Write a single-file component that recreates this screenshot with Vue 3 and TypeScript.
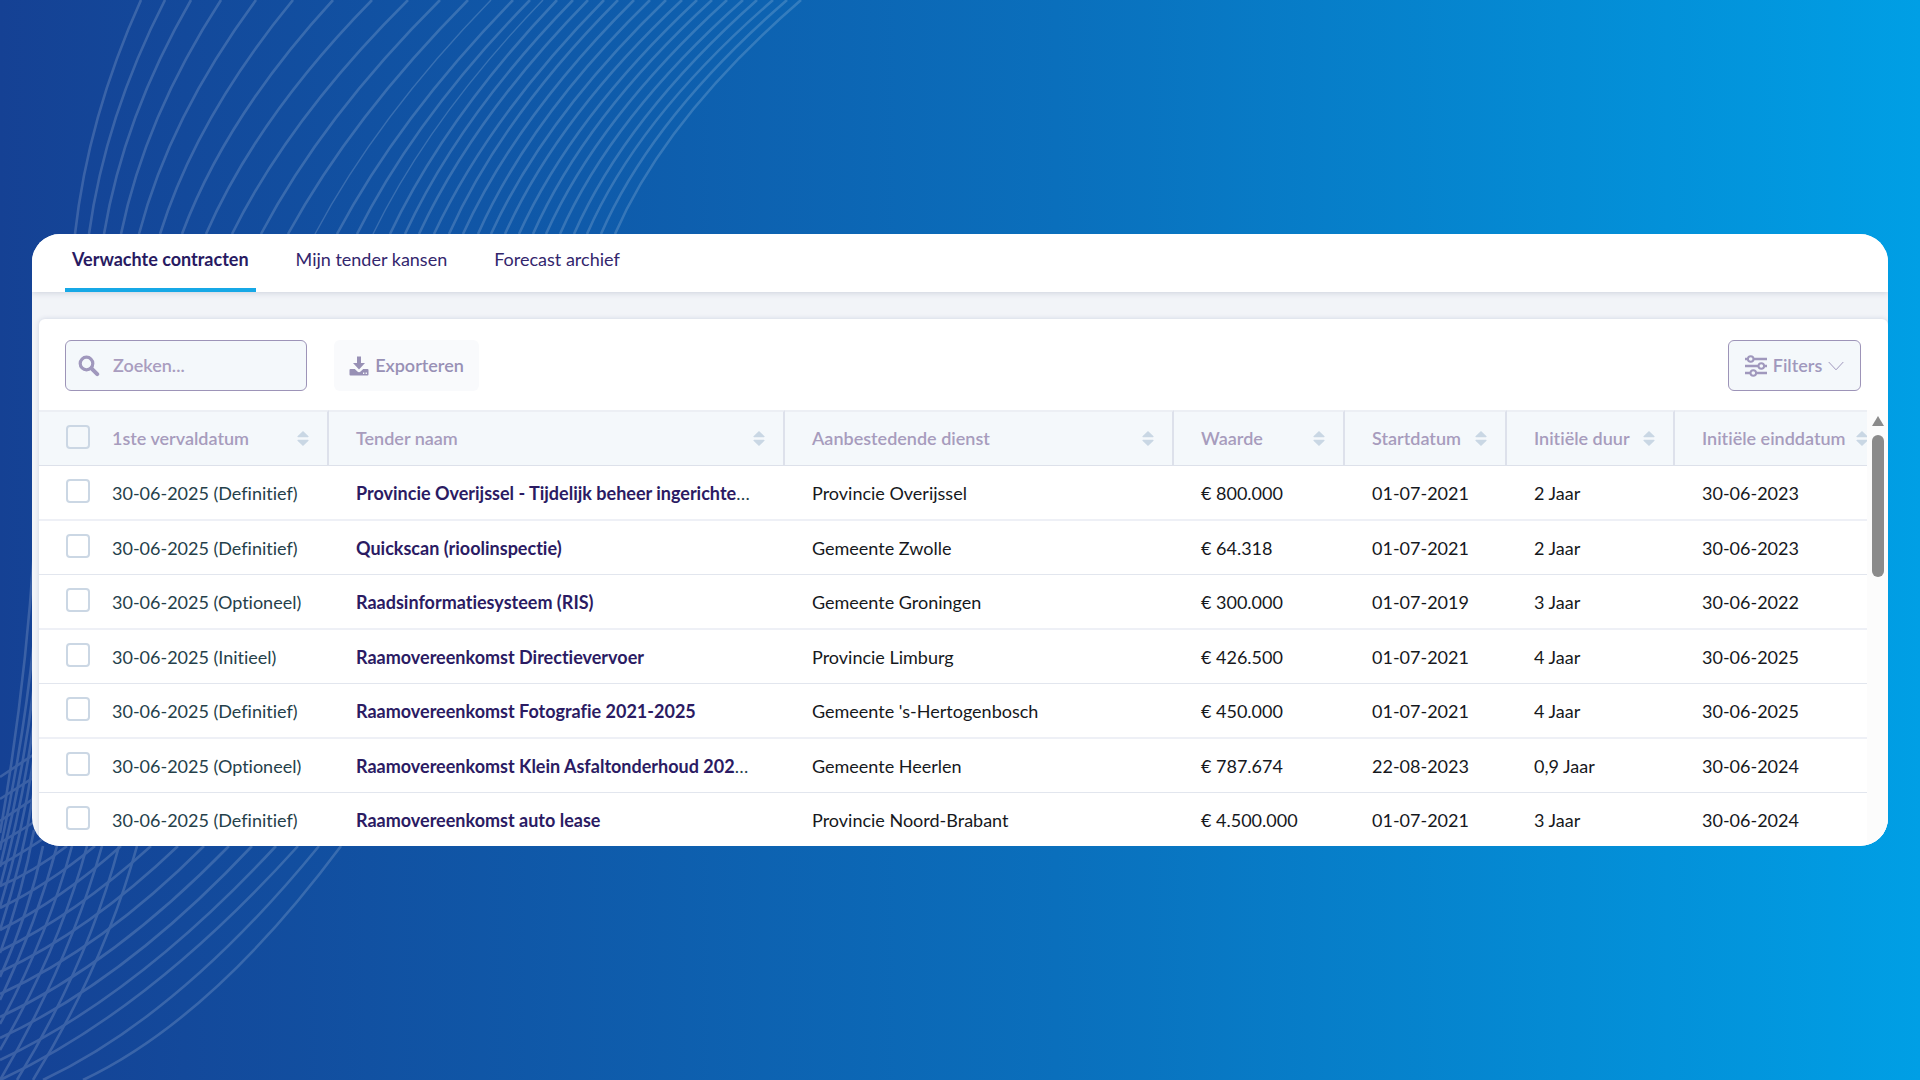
<script setup lang="ts">
import { ref } from 'vue'

interface Contract {
  expiry: string
  name: string
  truncated?: boolean
  authority: string
  value: string
  start: string
  duration: string
  end: string
}

type Curve = { d: string; w: number }

const tabs = ['Verwachte contracten', 'Mijn tender kansen', 'Forecast archief']
const activeTab = ref(0)
const query = ref('')

const columns = [
  { key: 'expiry', label: '1ste vervaldatum' },
  { key: 'name', label: 'Tender naam' },
  { key: 'authority', label: 'Aanbestedende dienst' },
  { key: 'value', label: 'Waarde' },
  { key: 'start', label: 'Startdatum' },
  { key: 'duration', label: 'Initiële duur' },
  { key: 'end', label: 'Initiële einddatum' },
]

const contracts: Contract[] = [
  { expiry: '30-06-2025 (Definitief)', name: 'Provincie Overijssel - Tijdelijk beheer ingerichte', truncated: true, authority: 'Provincie Overijssel', value: '€ 800.000', start: '01-07-2021', duration: '2 Jaar', end: '30-06-2023' },
  { expiry: '30-06-2025 (Definitief)', name: 'Quickscan (rioolinspectie)', authority: 'Gemeente Zwolle', value: '€ 64.318', start: '01-07-2021', duration: '2 Jaar', end: '30-06-2023' },
  { expiry: '30-06-2025 (Optioneel)', name: 'Raadsinformatiesysteem (RIS)', authority: 'Gemeente Groningen', value: '€ 300.000', start: '01-07-2019', duration: '3 Jaar', end: '30-06-2022' },
  { expiry: '30-06-2025 (Initieel)', name: 'Raamovereenkomst Directievervoer', authority: 'Provincie Limburg', value: '€ 426.500', start: '01-07-2021', duration: '4 Jaar', end: '30-06-2025' },
  { expiry: '30-06-2025 (Definitief)', name: 'Raamovereenkomst Fotografie 2021-2025', authority: "Gemeente 's-Hertogenbosch", value: '€ 450.000', start: '01-07-2021', duration: '4 Jaar', end: '30-06-2025' },
  { expiry: '30-06-2025 (Optioneel)', name: 'Raamovereenkomst Klein Asfaltonderhoud 202', truncated: true, authority: 'Gemeente Heerlen', value: '€ 787.674', start: '22-08-2023', duration: '0,9 Jaar', end: '30-06-2024' },
  { expiry: '30-06-2025 (Definitief)', name: 'Raamovereenkomst auto lease', authority: 'Provincie Noord-Brabant', value: '€ 4.500.000', start: '01-07-2021', duration: '3 Jaar', end: '30-06-2024' },
]

// Upper fan: [x at the top edge, x at y = 234, bow to the left, stroke width]
const fan: number[][] = [
  [141, 75, 10, 2], [165, 89, 11, 2], [191, 104, 12, 2], [221, 121, 13, 2], [256, 139, 14, 2],
  [293, 160, 15, 2], [333, 182, 16, 2], [372, 206, 16, 2], [408, 232, 15, 2], [440, 261, 14, 2],
  [468, 288, 13, 2], [491, 315, 13, 1], [513, 337, 13, 2], [530, 357, 14, 2], [543, 373, 14, 1],
  [557, 390, 14, 2], [573, 405, 15, 2], [588, 419, 15, 2], [604, 434, 15, 2], [618, 449, 16, 2],
  [634, 463, 16, 2], [650, 478, 17, 2], [666, 491, 17, 2], [682, 505, 18, 2], [697, 519, 18, 2],
  [712, 533, 19, 2], [727, 546, 19, 2], [743, 560, 20, 2], [757, 574, 20, 2], [773, 587, 21, 2],
  [787, 601, 21, 2], [801, 615, 21, 2],
]

// Lower net: [x1, y1, x2, y2, bow x, bow y]
const net: number[][] = [
  [341, 846, 83, 1080, 0, 28], [319, 846, 43, 1080, 0, 26], [298, 846, 0, 1080, 0, 24],
  [276, 846, 0, 1060, 0, 21], [252, 846, 0, 1038, 0, 19], [229, 846, 0, 1017, 0, 16],
  [204, 846, 0, 994, 0, 14], [178, 846, 0, 972, 0, 11], [151, 846, 0, 951, 0, 8],
  [121, 846, 0, 930, 0, 6], [95, 846, 0, 908, 0, 4], [67, 846, 0, 886, 0, 3],
  [50, 834, 0, 865, 0, 1], [36, 821, 0, 843, 0, 0], [36, 797, 0, 821, 0, 0],
  [36, 776, 0, 799, 0, 0], [36, 753, 0, 777, 0, 0],
  [137, 846, 33, 1080, 10, 0], [119, 846, 17, 1080, 10, 0], [102, 846, 0, 1080, 9, 0],
  [87, 846, 0, 1050, 8, 0], [72, 846, 0, 1024, 6, 0], [57, 846, 0, 1000, 4, 0],
  [43, 846, 0, 977, 4, 0], [34, 830, 0, 953, 3, 0], [34, 790, 0, 930, 3, 0],
  [34, 756, 0, 907, 3, 0], [34, 720, 0, 887, 3, 0], [34, 685, 0, 867, 3, 0],
  [34, 640, 0, 850, 3, 0], [34, 550, 0, 833, 4, 0],
]

const curves: Curve[] = [
  ...fan.map(([t, b, bow, w]) => ({ d: `M${t} 0Q${(t + b) / 2 - bow * 2} 117 ${b} 234`, w: w === 2 ? 2.6 : 1.4 })),
  ...net.map(([x1, y1, x2, y2, bx, by]) => ({
    d: `M${x1} ${y1}Q${(x1 + x2) / 2 + bx * 2} ${(y1 + y2) / 2 + by * 2} ${x2} ${y2}`,
    w: 2.6,
  })),
]
</script>

<template>
  <div class="page">
    <svg class="waves" viewBox="0 0 1920 1080" preserveAspectRatio="xMinYMin slice" aria-hidden="true">
      <g fill="none" stroke="#fff" opacity="0.16">
        <path v-for="(c, i) in curves" :key="i" :d="c.d" :stroke-width="c.w" />
      </g>
    </svg>

    <main class="card">
      <nav class="tabs">
        <a
          v-for="(tab, i) in tabs"
          :key="tab"
          href="#"
          class="tab"
          :class="{ active: i === activeTab }"
          @click.prevent="activeTab = i"
        >{{ tab }}</a>
      </nav>

      <section class="panel">
        <div class="toolbar">
          <label class="search">
            <svg width="22" height="22" viewBox="0 0 22 22" aria-hidden="true">
              <circle cx="8.500" cy="8.500" r="6.300" fill="none" stroke="currentColor" stroke-width="3.200" />
              <path d="M13.400 13.400l5.800 5.800" stroke="currentColor" stroke-width="4" stroke-linecap="round" />
            </svg>
            <input v-model="query" type="text" placeholder="Zoeken..." aria-label="Zoeken" />
          </label>
          <button type="button" class="export">
            <svg width="20" height="20" viewBox="0 0 20 20" aria-hidden="true">
              <path fill="currentColor" d="M8 .5h4v6.500h4L10 13.500 4 7h4z" />
              <path fill="currentColor" fill-rule="evenodd" d="M1.500 13h4.300l2.600 2.600q1.600 1.300 3.200 0l2.600-2.600h4.300q1 0 1 1v4.500q0 1-1 1h-17q-1 0-1-1V14q0-1 1-1zM14 16.600v1.400h1.300v-1.400zm2.600 0v1.400h1.300v-1.400z" />
            </svg>
            <span>Exporteren</span>
          </button>
          <button type="button" class="filters">
            <svg width="22" height="22" viewBox="0 0 22 22" fill="none" stroke="currentColor" stroke-width="2" aria-hidden="true">
              <path d="M0 4h3m5.500 0H22M0 11h13.500m5.500 0h3M0 18h5.500m5.500 0h11" stroke-width="2.600" />
              <circle cx="5.700" cy="4" r="2.800" />
              <circle cx="16.300" cy="11" r="2.800" />
              <circle cx="8.300" cy="18" r="2.800" />
            </svg>
            <span>Filters</span>
            <svg width="16" height="10" viewBox="0 0 16 10" fill="none" stroke="currentColor" aria-hidden="true">
              <path d="M.7 1L8 8.800 15.300 1" />
            </svg>
          </button>
        </div>

        <div class="grid">
          <div class="viewport">
            <table>
              <colgroup>
                <col class="c-check" />
                <col v-for="c in columns" :key="c.key" :class="'c-' + c.key" />
              </colgroup>
              <thead>
                <tr>
                  <th class="check"><input type="checkbox" aria-label="Alles selecteren" /></th>
                  <th v-for="c in columns" :key="c.key" :class="c.key" scope="col">
                    <div class="head">
                      <span>{{ c.label }}</span>
                      <svg width="12" height="15" viewBox="0 0 12 15" aria-hidden="true">
                        <path fill="currentColor" d="M6 0l5.500 5.300q.5 1-.7 1H1.200q-1.200 0-.7-1zM6 15l5.500-5.300q.5-1-.7-1H1.200q-1.200 0-.7 1z" />
                      </svg>
                    </div>
                  </th>
                </tr>
              </thead>
              <tbody>
                <tr v-for="row in contracts" :key="row.name">
                  <td class="check"><input type="checkbox" :aria-label="row.name" /></td>
                  <td class="expiry">{{ row.expiry }}</td>
                  <td class="name"><a href="#">{{ row.name }}</a><span v-if="row.truncated">…</span></td>
                  <td>{{ row.authority }}</td>
                  <td>{{ row.value }}</td>
                  <td>{{ row.start }}</td>
                  <td>{{ row.duration }}</td>
                  <td>{{ row.end }}</td>
                </tr>
              </tbody>
            </table>
          </div>
          <div class="scrollbar" aria-hidden="true">
            <span class="arrow"></span>
            <span class="thumb"></span>
          </div>
        </div>
      </section>
    </main>
  </div>
</template>

<style>
body {
  margin: 0;
}
</style>

<style scoped>
.page {
  position: relative;
  box-sizing: border-box;
  min-height: 100vh;
  padding: 234px 32px;
  background: linear-gradient(90deg, #154194, #0a6fbc 55%, #009fe5);
  font-family: Lato, 'Open Sans', sans-serif;
  font-size: 18px;
  font-variant-ligatures: none;
  line-height: 24px;
  overflow: hidden;
}

.waves {
  position: absolute;
  inset: 0;
  width: 100%;
  height: 100%;
}

.card {
  position: relative;
  overflow: hidden;
  border-radius: 28px;
  background: #f2f4f8;
}

.tabs {
  position: relative;
  display: flex;
  gap: 33px;
  padding-left: 33px;
  background: #fff;
  box-shadow: 0 1px 6px #ccd2dc;
}

.tab {
  box-sizing: border-box;
  height: 58px;
  padding: 13px 7px 17px;
  border-bottom: 4px solid transparent;
  color: #33266d;
  text-decoration: none;
}

.tab.active {
  border-color: #16a8e6;
  color: #281a62;
  font-weight: 700;
}

.panel {
  margin: 27px 0 0 7px;
  border-radius: 6px 6px 0 0;
  background: #fff;
  box-shadow: 0 0 5px #cdd2e0;
}

.toolbar {
  display: flex;
  gap: 27px;
  padding: 21px 27px 19px 26px;
  color: #a098bd;
  font-weight: 600;
}

.search {
  display: flex;
  align-items: center;
  gap: 13px;
  box-sizing: border-box;
  width: 242px;
  height: 51px;
  padding: 0 12px;
  border: 1px solid #9d94b8;
  border-radius: 6px;
  background: #f4f8fb;
}

.search input {
  flex: 1;
  min-width: 0;
  padding: 0 0 2px;
  border: 0;
  outline: 0;
  background: none;
  color: inherit;
  font: inherit;
}

.search input::placeholder {
  color: #a99dbf;
  opacity: 1;
}

button {
  display: flex;
  align-items: center;
  justify-content: center;
  gap: 6px;
  height: 51px;
  padding: 0;
  border: 0;
  border-radius: 6px;
  color: inherit;
  font: inherit;
}

button span,
.head span {
  padding-bottom: 2px;
}

.export {
  width: 145px;
  background: #f9fafc;
  color: #9890b5;
}

.filters {
  width: 133px;
  margin-left: auto;
  border: 1px solid #9d94b8;
  background: #f4f8fb;
}

.grid {
  display: flex;
}

.viewport {
  flex: 1;
  min-width: 0;
  overflow: hidden;
}

table {
  width: calc(100% + 21px);
  border-collapse: separate;
  border-spacing: 0;
  table-layout: fixed;
}

.c-check { width: 73px; }
.c-expiry { width: 217px; }
.c-authority { width: 389px; }
.c-value { width: 171px; }
.c-start { width: 162px; }
.c-duration { width: 168px; }
.c-end { width: 213px; }

th,
td {
  box-sizing: border-box;
  height: 54px;
  padding: 0 0 0 27px;
  text-align: left;
  white-space: nowrap;
}

th {
  height: 56px;
  padding-right: 18px;
  border-top: 2px solid #eceff4;
  border-right: 2px solid #dde1eb;
  border-bottom: 1px solid #dde1ea;
  background: #f4f8fb;
  color: #a79cbd;
  font-weight: 600;
}

td {
  border-bottom: 1px solid #e2e6ee;
  color: #16181c;
}

tbody tr:nth-child(odd) td {
  height: 55px;
  border-bottom-width: 2px;
  border-color: #eef0f6;
}

tbody tr:last-child td {
  height: 53px;
  border-bottom: 0;
}

th.check,
td.check {
  padding: 0 0 0 27px;
  border-right: 0;
}

th.expiry,
td.expiry {
  padding-left: 0;
}

td.expiry,
td.name {
  color: #25404a;
}

.name a {
  color: #2b1b63;
  font-weight: 700;
  text-decoration: none;
}

.head {
  display: flex;
  align-items: center;
  justify-content: space-between;
}

.head svg {
  color: #c9d7e4;
}

input[type='checkbox'] {
  display: block;
  appearance: none;
  box-sizing: border-box;
  width: 24px;
  height: 24px;
  margin: 0 0 3px;
  border: 2px solid #cbd7e4;
  border-radius: 4px;
  background: transparent;
}

.scrollbar {
  display: flex;
  flex-direction: column;
  align-items: center;
  gap: 9px;
  width: 21px;
  padding-top: 6px;
  background: #fcfcfc;
}

.arrow {
  border: 6px solid transparent;
  border-top: 0;
  border-bottom: 10px solid #8b8b8b;
}

.thumb {
  width: 12px;
  height: 142px;
  border-radius: 6px;
  background: #8b8b8b;
}
</style>
